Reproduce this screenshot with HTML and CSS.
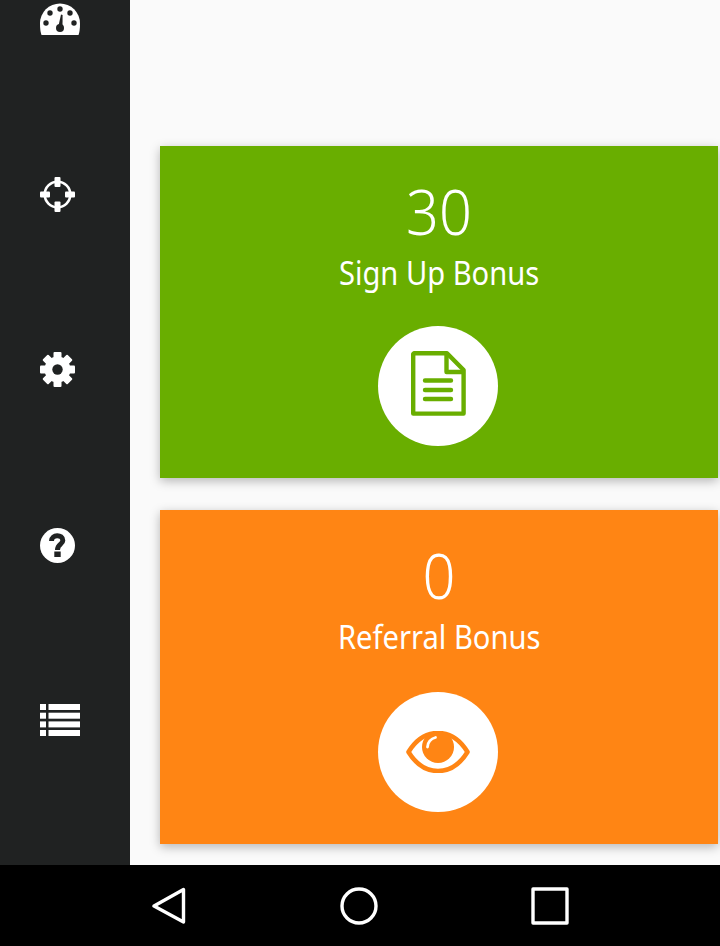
FILE: index.html
```html
<!DOCTYPE html>
<html>
<head>
<title>Bonus</title>
<link rel="stylesheet" href="styles.css">
</head>
<body>

<div class="screen">
	<div class="sidebar">
		<ul class="menu">
			<li>
				<svg class="menu-icon" width="40" height="32" viewBox="0 0 40 32">
					<path fill="#fff" d="M1.5 32C.5 29 0 26 0 20.500A20 20 0 0 1 40 20.500C40 26 39.500 29 38.500 32Z"/>
					<g fill="#202222">
						<circle cx="20" cy="6" r="2.7"/>
						<circle cx="10" cy="10" r="2.7"/>
						<circle cx="30" cy="10" r="2.7"/>
						<circle cx="6" cy="20" r="2.7"/>
						<circle cx="34" cy="20" r="2.7"/>
						<circle cx="20" cy="25" r="4"/>
						<path d="M18 25L21 11.500L22.600 12L22.500 25Z"/>
					</g>
				</svg>
			</li>
			<li>
				<svg class="menu-icon" width="35" height="35" viewBox="0 .5 35 35">
					<circle cx="17.500" cy="18" r="12.800" fill="none" stroke="#fff" stroke-width="2.600"/>
					<g fill="#fff">
						<rect x="14.500" y=".5" width="6" height="10" rx="1"/>
						<rect x="14.500" y="25" width="6" height="10.500" rx="1"/>
						<rect x="0" y="15" width="10" height="6" rx="1"/>
						<rect x="25" y="15" width="10" height="6" rx="1"/>
					</g>
				</svg>
			</li>
			<li>
				<svg class="menu-icon" width="35" height="35" viewBox="0 .5 35 35">
					<g fill="#fff">
						<circle cx="17.500" cy="18" r="13"/>
						<rect x="13.500" y=".5" width="8" height="35" rx="1"/>
						<rect x="0" y="14" width="35" height="8" rx="1"/>
						<rect x="13.500" y=".5" width="8" height="35" rx="1" transform="rotate(45 17.500 18)"/>
						<rect x="0" y="14" width="35" height="8" rx="1" transform="rotate(45 17.500 18)"/>
					</g>
					<circle cx="17.500" cy="18" r="5.200" fill="#202222"/>
				</svg>
			</li>
			<li>
				<svg class="menu-icon menu-icon-help" width="35" height="35" viewBox="0 .5 35 35">
					<circle cx="17.500" cy="18" r="17.500" fill="#fff"/>
					<path d="M11.500 13.500C11.500 6.500 22.800 6.500 22.800 13C22.800 17 17.500 16.500 17.500 22.500" fill="none" stroke="#202222" stroke-width="5"/>
					<rect x="14.300" y="24" width="6.400" height="5.500" fill="#202222"/>
				</svg>
			</li>
			<li>
				<svg class="menu-icon" width="40" height="32" viewBox="0 0 40 32">
					<g fill="#fff">
						<rect y="0" width="6" height="6"/><rect x="8.500" y="0" width="31.500" height="6"/>
						<rect y="8.700" width="6" height="6"/><rect x="8.500" y="8.700" width="31.500" height="6"/>
						<rect y="17.400" width="6" height="6"/><rect x="8.500" y="17.400" width="31.500" height="6"/>
						<rect y="26" width="6" height="6"/><rect x="8.500" y="26" width="31.500" height="6"/>
					</g>
				</svg>
			</li>
		</ul>
	</div>

	<div class="content">
		<div class="card card-green">
			<div class="card-value">30</div>
			<div class="card-label">Sign Up Bonus</div>
			<div class="card-circle">
				<svg class="doc-icon" width="56" height="65" viewBox="0 0 56 65" fill="none" stroke="#69ae00" stroke-width="4.400" stroke-linejoin="round">
					<path d="M4 2.200H37L53.600 19V62.600H3.200V3Z"/>
					<path d="M36.500 2.200V21H53.600"/>
					<path d="M15 29.500H41M15 39H41M15 48H41" stroke-linecap="round" stroke-width="4.400"/>
				</svg>
			</div>
		</div>
		<div class="card card-orange">
			<div class="card-value">0</div>
			<div class="card-label">Referral Bonus</div>
			<div class="card-circle">
				<svg width="64" height="42" viewBox="0 0 64 42" fill="none">
					<path d="M2.500 21C18 -4.300 46 -4.300 61.500 21C46 46.300 18 46.300 2.500 21Z" stroke="#ff8514" stroke-width="4.600" stroke-linejoin="round"/>
					<circle cx="32" cy="16" r="16" fill="#ff8514"/>
					<path d="M21.500 16C21.500 11.500 25 7.500 29.500 6.500" stroke="#fff" stroke-width="2.800" stroke-linecap="round"/>
				</svg>
			</div>
		</div>
	</div>
</div>

<div class="navbar">
	<svg width="35" height="38" viewBox="0 0 35 38" fill="none" stroke="#fff" stroke-width="3.400" stroke-linejoin="round"><path d="M31.500 2.500V35L2 19Z"/></svg>
	<svg width="38" height="38" viewBox="0 0 38 38" fill="none" stroke="#fff" stroke-width="3.400"><circle cx="19" cy="19" r="17"/></svg>
	<svg width="38" height="38" viewBox="0 0 38 38" fill="none" stroke="#fff" stroke-width="3.400" stroke-linejoin="round"><rect x="2" y="2" width="34" height="34"/></svg>
</div>

</body>
</html>
```

FILE: styles.css
```css
html, body {
	margin: 0;
	padding: 0;
}
body {
	width: 720px;
	height: 946px;
	overflow: hidden;
	display: flex;
	flex-direction: column;
	background: #fafafa;
	font-family: "Noto Sans", sans-serif;
	color: #fff;
}
.screen {
	display: flex;
	height: 865px;
}
.sidebar {
	width: 130px;
	flex-shrink: 0;
	background: #202222;
	overflow: hidden;
}
.menu {
	list-style: none;
	margin: -69px 0 0;
	padding: 0 0 0 40px;
}
.menu li {
	height: 175.4px;
	display: flex;
	align-items: center;
}
.menu-icon {
	display: block;
}
.menu-icon-help {
	margin-top: 2px;
}
.content {
	flex: 1;
	padding: 146px 2px 0 30px;
	display: flex;
	flex-direction: column;
	gap: 32px;
}
.card {
	display: flex;
	flex-direction: column;
	align-items: center;
	box-shadow: 0 3px 10px rgba(0, 0, 0, .28);
}
.card-green {
	height: 332px;
	background: #69ae00;
}
.card-orange {
	height: 334px;
	background: #ff8514;
}
.card-value {
	margin-top: 27px;
	height: 80px;
	line-height: 76px;
	font-size: 63px;
	font-weight: 300;
	transform: scaleX(.915);
}
.card-label {
	height: 40px;
	line-height: 40px;
	font-size: 32px;
	transform: scaleX(.91);
}
.card-circle {
	width: 120px;
	height: 120px;
	margin: 33px 2px 0 0;
	border-radius: 50%;
	background: #fff;
	display: flex;
	align-items: center;
	justify-content: center;
}
.card-orange .card-circle {
	margin-top: 35px;
}
.doc-icon {
	margin-bottom: 6px;
}
.navbar {
	height: 81px;
	background: #000;
	display: flex;
	align-items: center;
	padding-left: 152px;
	gap: 153px;
}
```
